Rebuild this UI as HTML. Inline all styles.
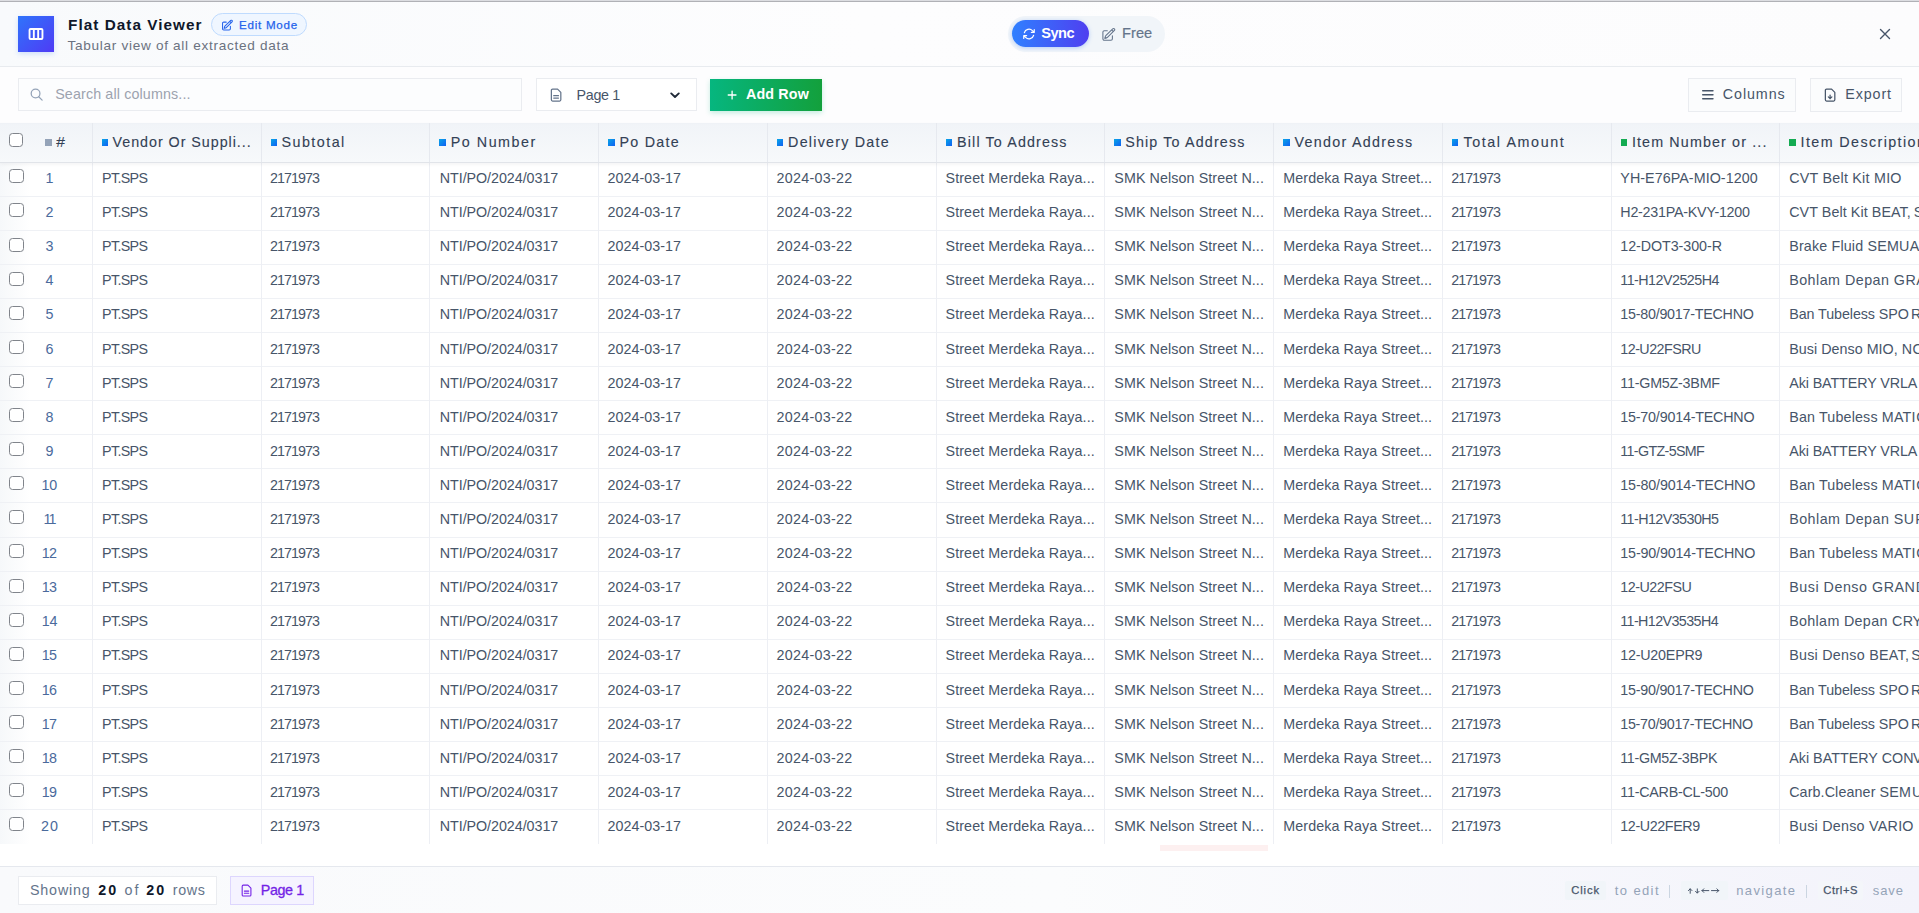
<!DOCTYPE html>
<html lang="en"><head><meta charset="utf-8"><title>Flat Data Viewer</title>
<style>
*{box-sizing:border-box;margin:0;padding:0}
html,body{width:1919px;height:913px;overflow:hidden;background:#fff}
body{font-family:"Liberation Sans",sans-serif;color:#475569;position:relative}
.abs,.t,.box,.cb,.sq,.vl,.row,.kbd,.sep{position:absolute}
.t{white-space:pre;display:block}
svg{display:block;overflow:visible}
.topline{position:absolute;left:0;top:0;width:1919px;height:2px;background:linear-gradient(#dcdde1 0,#dcdde1 50%,#b0b1b6 50%,#b0b1b6 100%)}
.hdr{position:absolute;left:0;top:2px;width:1919px;height:65px;background:linear-gradient(90deg,#f8fafc,#fdfdfe 45%,#fcfcfd);border-bottom:1px solid #e8ebef}
.hdr>*{margin-top:-2px}
.logo{position:absolute;left:18px;top:16px;width:36px;height:36px;background:linear-gradient(135deg,#2f74fb,#4f3bf5);box-shadow:0 2px 5px rgba(59,130,246,.22);display:flex;align-items:center;justify-content:center}
.pill-edit{position:absolute;left:211px;top:13px;width:96px;height:23px;border:1px solid #bfdbfe;background:#eff6ff;border-radius:12px}
.toggle{position:absolute;left:1008.300px;top:16.200px;width:156.400px;height:35.500px;border-radius:18px;background:#f1f5f9}
.sync{position:absolute;left:1012px;top:20px;width:76.700px;height:27px;border-radius:14px;background:linear-gradient(90deg,#2f80ff,#4f3ff0);box-shadow:0 1px 4px rgba(59,130,246,.35)}
.toolbar{position:absolute;left:0;top:67px;width:1919px;height:56px;background:#fdfdfe}
.toolbar>*{margin-top:-67px}
.box{border:1px solid #eaecf0;background:#fff}
.box.btn{background:#fbfcfd;border-color:#eaecf0}
.addrow{position:absolute;left:710px;top:79px;width:112px;height:32px;background:linear-gradient(90deg,#06b67f,#13a03c);box-shadow:0 2px 5px rgba(16,185,129,.24)}
.tbl{position:absolute;left:0;top:0;width:1919px;height:867px}
.tbody{position:absolute;left:0;top:0;width:1919px;height:867px}
.row{left:0;width:1919px;height:1px;background:#eff1f5}
.stick{position:absolute;left:0;top:162px;width:30px;height:682px;background:linear-gradient(90deg,#f6f8fa,#fff)}
.vl{top:162px;width:1px;height:682px;background:#edeff4}
.vl.h{top:0;height:39px;background:#e6e9ef}
.cb{left:9px;width:15px;height:14px;border:1.500px solid #80848b;border-radius:3.500px;background:#fff}
.cb.hc{width:14px;height:14px}
.thead{position:absolute;left:0;top:123px;width:1919px;height:39px;background:linear-gradient(#eef1f6 0,#f1f4f8 2px,#f7f9fb);box-shadow:0 1px 0 #e1e4e9,0 2px 4px rgba(15,23,42,.06)}
.sq{top:16px;width:6.500px;height:7px}
.sq.b{background:linear-gradient(135deg,#08a6e6,#1060f3)}
.sq.g{background:#14ab52}
.ftr{position:absolute;left:0;top:866px;width:1919px;height:47px;border-top:1px solid #e5e8ee;background:linear-gradient(90deg,#f9fafc,#fbfcfd 55%,#f3f3fb)}
.ftr>*{margin-top:-867px}
.chip{position:absolute;left:230px;top:876.250px;width:83.750px;height:28.250px;border:1px solid #ddd6fe;background:#f5f3ff}
.kbd{top:881.250px;height:18.750px;background:#f1f5f9;border-radius:2px}
.sep{top:884.500px;width:1px;height:13px;background:#cbd5e1}
.ghost{position:absolute;left:1160px;top:845px;width:108px;height:6px;background:#fdf0f0}
</style></head>
<body>
<div class="topline"></div>
<header class="hdr">
<div class="logo"><svg viewBox="0 0 24 24" width="18" height="18" fill="none" stroke="#fff" stroke-width="2.500" stroke-linecap="round" stroke-linejoin="round"><rect x="3.400" y="5.400" width="17.200" height="13.200" rx="1.400"/><path d="M9.100 5.400v13.200M14.900 5.400v13.200"/></svg></div>
<span class="t" style="left:68.00px;top:16.95px;font-size:15.3px;line-height:15.3px;font-weight:700;color:#0f172a;letter-spacing:1.040px;">Flat Data Viewer</span>
<span class="t" style="left:67.50px;top:38.89px;font-size:13.6px;line-height:13.6px;color:#6b7280;letter-spacing:0.697px;">Tabular view of all extracted data</span>
<div class="pill-edit"></div>
<svg class="abs" style="left:221px;top:18.5px" width="12.5" height="12.5" viewBox="0 0 24 24" fill="none" stroke="#2563eb" stroke-width="2" stroke-linecap="round" stroke-linejoin="round"><path d="m16.862 4.487 1.687-1.688a1.875 1.875 0 1 1 2.652 2.652L10.582 16.07a4.5 4.5 0 0 1-1.897 1.13L6 18l.8-2.685a4.5 4.5 0 0 1 1.13-1.897l8.932-8.931Zm0 0L19.5 7.125M18 14v4.75A2.25 2.25 0 0 1 15.750 21H5.250A2.250 2.250 0 0 1 3 18.750V8.250A2.250 2.250 0 0 1 5.250 6H10"/></svg>
<span class="t" style="left:239.00px;top:19.38px;font-size:11.6px;line-height:11.6px;color:#2563eb;letter-spacing:0.750px;-webkit-text-stroke:0.25px #2563eb;">Edit Mode</span>
<div class="toggle"></div><div class="sync"></div>
<svg class="abs" style="left:1021.5px;top:27.3px" width="14" height="14" viewBox="0 0 24 24" fill="none" stroke="#fff" stroke-width="2" stroke-linecap="round" stroke-linejoin="round"><path d="M16.023 9.348h4.992v-.001M2.985 19.644v-4.992m0 0h4.992m-4.993 0 3.181 3.183a8.250 8.250 0 0 0 13.803-3.700M4.031 9.865a8.250 8.250 0 0 1 13.803-3.700l3.181 3.182m0-4.991v4.990"/></svg>
<span class="t" style="left:1041.20px;top:26.04px;font-size:14.6px;line-height:14.6px;font-weight:700;color:#ffffff;letter-spacing:-0.464px;">Sync</span>
<svg class="abs" style="left:1101px;top:26.800px" width="15.200" height="15.200" viewBox="0 0 24 24" fill="none" stroke="#64748b" stroke-width="1.7" stroke-linecap="round" stroke-linejoin="round"><path d="m16.862 4.487 1.687-1.688a1.875 1.875 0 1 1 2.652 2.652L10.582 16.07a4.5 4.5 0 0 1-1.897 1.13L6 18l.8-2.685a4.5 4.5 0 0 1 1.13-1.897l8.932-8.931Zm0 0L19.5 7.125M18 14v4.75A2.25 2.25 0 0 1 15.750 21H5.250A2.250 2.250 0 0 1 3 18.750V8.250A2.250 2.250 0 0 1 5.250 6H10"/></svg>
<span class="t" style="left:1122.00px;top:25.84px;font-size:14.6px;line-height:14.6px;color:#64748b;letter-spacing:0.061px;-webkit-text-stroke:0.2px #64748b;">Free</span>
<svg class="abs" style="left:1876.750px;top:26.250px" width="16" height="16" viewBox="0 0 16 16" fill="none" stroke="#475569" stroke-width="1.400" stroke-linecap="round"><path d="M3.500 3.500l9 9M12.500 3.500l-9 9"/></svg>
</header>
<div class="toolbar">
<div class="box" style="left:18px;top:78px;width:504px;height:33px;background:#fcfdfe"></div>
<svg class="abs" style="left:29px;top:87px" width="15" height="15" viewBox="0 0 24 24" fill="none" stroke="#94a3b8" stroke-width="2" stroke-linecap="round"><circle cx="10.500" cy="10.500" r="7"/><path d="M21 21l-5.500-5.500"/></svg>
<span class="t" style="left:55.20px;top:87.20px;font-size:14.3px;line-height:14.3px;color:#9ca3af;letter-spacing:0.130px;">Search all columns...</span>
<div class="box" style="left:536px;top:78px;width:161px;height:33px"></div>
<svg class="abs" style="left:549.050px;top:87.500px" width="14.2" height="14.2" viewBox="0 0 24 24" fill="none" stroke="#64748b" stroke-width="2.1" stroke-linecap="round" stroke-linejoin="round"><path d="M14.500 2H6a2 2 0 0 0-2 2v16a2 2 0 0 0 2 2h12a2 2 0 0 0 2-2V7.500L14.500 2z"/><path d="M16 13H8M16 17H8"/></svg>
<span class="t" style="left:576.50px;top:87.70px;font-size:14.3px;line-height:14.3px;letter-spacing:-0.306px;">Page 1</span>
<svg class="abs" style="left:668.300px;top:89px" width="14" height="12" viewBox="0 0 14 12" fill="none" stroke="#1f2937" stroke-width="1.900" stroke-linecap="round" stroke-linejoin="round"><path d="M3.200 4.400l3.800 3.600 3.800-3.600"/></svg>
<div class="addrow"></div>
<svg class="abs" style="left:725.800px;top:88.700px" width="12" height="12" viewBox="0 0 12 12" fill="none" stroke="#fff" stroke-width="1.300" stroke-linecap="round"><path d="M6.100 2.100v7.800M2.200 6h7.800"/></svg>
<span class="t" style="left:746.00px;top:87.20px;font-size:14.3px;line-height:14.3px;font-weight:700;color:#ffffff;letter-spacing:0.141px;">Add Row</span>
<div class="box btn" style="left:1688px;top:78px;width:108px;height:34px"></div>
<svg class="abs" style="left:1701px;top:88px" width="14" height="14" viewBox="0 0 14 14" fill="none" stroke="#475569" stroke-width="1.400" stroke-linecap="round"><path d="M1.700 2.700h10.300M1.700 6.800h10.300M1.700 10.800h10.300"/></svg>
<span class="t" style="left:1722.80px;top:87.10px;font-size:14.3px;line-height:14.3px;letter-spacing:0.913px;">Columns</span>
<div class="box btn" style="left:1810px;top:78px;width:92px;height:34px"></div>
<svg class="abs" style="left:1822.750px;top:87.600px" width="14.200" height="14.200" viewBox="0 0 24 24" fill="none" stroke="#475569" stroke-width="2.100" stroke-linecap="round" stroke-linejoin="round"><path d="M14.500 2H6a2 2 0 0 0-2 2v16a2 2 0 0 0 2 2h12a2 2 0 0 0 2-2V7.500L14.500 2z"/><path d="M12 18v-6M9 15l3 3 3-3"/></svg>
<span class="t" style="left:1845.30px;top:87.10px;font-size:14.3px;line-height:14.3px;letter-spacing:0.874px;">Export</span>
</div>
<div class="tbl">
<div class="tbody">
<div class="stick"></div>
<div class="row" style="top:196px"></div>
<div class="row" style="top:230px"></div>
<div class="row" style="top:264px"></div>
<div class="row" style="top:298px"></div>
<div class="row" style="top:332px"></div>
<div class="row" style="top:366px"></div>
<div class="row" style="top:400px"></div>
<div class="row" style="top:434px"></div>
<div class="row" style="top:468px"></div>
<div class="row" style="top:502px"></div>
<div class="row" style="top:537px"></div>
<div class="row" style="top:571px"></div>
<div class="row" style="top:605px"></div>
<div class="row" style="top:639px"></div>
<div class="row" style="top:673px"></div>
<div class="row" style="top:707px"></div>
<div class="row" style="top:741px"></div>
<div class="row" style="top:775px"></div>
<div class="row" style="top:809px"></div>
<div class="ghost"></div>
<div class="vl" style="left:92px"></div>
<div class="vl" style="left:261px"></div>
<div class="vl" style="left:429px"></div>
<div class="vl" style="left:598px"></div>
<div class="vl" style="left:767px"></div>
<div class="vl" style="left:936px"></div>
<div class="vl" style="left:1104px"></div>
<div class="vl" style="left:1273px"></div>
<div class="vl" style="left:1442px"></div>
<div class="vl" style="left:1611px"></div>
<div class="vl" style="left:1779px"></div>
<div class="cb" style="top:169.30px"></div>
<span class="t" style="left:45.60px;top:171.00px;font-size:14.3px;line-height:14.3px;color:#4a6a9c;">1</span>
<span class="t" style="left:102.00px;top:171.00px;font-size:14.3px;line-height:14.3px;letter-spacing:-0.653px;">PT.SPS</span>
<span class="t" style="left:270.10px;top:171.00px;font-size:14.3px;line-height:14.3px;letter-spacing:-0.979px;">2171973</span>
<span class="t" style="left:439.75px;top:171.00px;font-size:14.3px;line-height:14.3px;letter-spacing:-0.048px;">NTI/PO/2024/0317</span>
<span class="t" style="left:607.60px;top:171.00px;font-size:14.3px;line-height:14.3px;letter-spacing:0.018px;">2024-03-17</span>
<span class="t" style="left:776.50px;top:171.00px;font-size:14.3px;line-height:14.3px;letter-spacing:0.284px;">2024-03-22</span>
<span class="t" style="left:945.50px;top:171.00px;font-size:14.3px;line-height:14.3px;letter-spacing:0.104px;">Street Merdeka Raya...</span>
<span class="t" style="left:1114.30px;top:171.00px;font-size:14.3px;line-height:14.3px;letter-spacing:0.086px;">SMK Nelson Street N...</span>
<span class="t" style="left:1283.30px;top:171.00px;font-size:14.3px;line-height:14.3px;letter-spacing:0.085px;">Merdeka Raya Street...</span>
<span class="t" style="left:1451.20px;top:171.00px;font-size:14.3px;line-height:14.3px;letter-spacing:-0.979px;">2171973</span>
<span class="t" style="left:1620.30px;top:171.00px;font-size:14.3px;line-height:14.3px;letter-spacing:0.062px;">YH-E76PA-MIO-1200</span>
<span class="t" style="left:1789.20px;top:171.00px;font-size:14.3px;line-height:14.3px;letter-spacing:0.248px;">CVT Belt Kit MIO</span>
<div class="cb" style="top:203.41px"></div>
<span class="t" style="left:45.60px;top:205.10px;font-size:14.3px;line-height:14.3px;color:#4a6a9c;">2</span>
<span class="t" style="left:102.00px;top:205.10px;font-size:14.3px;line-height:14.3px;letter-spacing:-0.653px;">PT.SPS</span>
<span class="t" style="left:270.10px;top:205.10px;font-size:14.3px;line-height:14.3px;letter-spacing:-0.979px;">2171973</span>
<span class="t" style="left:439.75px;top:205.10px;font-size:14.3px;line-height:14.3px;letter-spacing:-0.048px;">NTI/PO/2024/0317</span>
<span class="t" style="left:607.60px;top:205.10px;font-size:14.3px;line-height:14.3px;letter-spacing:0.018px;">2024-03-17</span>
<span class="t" style="left:776.50px;top:205.10px;font-size:14.3px;line-height:14.3px;letter-spacing:0.284px;">2024-03-22</span>
<span class="t" style="left:945.50px;top:205.10px;font-size:14.3px;line-height:14.3px;letter-spacing:0.104px;">Street Merdeka Raya...</span>
<span class="t" style="left:1114.30px;top:205.10px;font-size:14.3px;line-height:14.3px;letter-spacing:0.086px;">SMK Nelson Street N...</span>
<span class="t" style="left:1283.30px;top:205.10px;font-size:14.3px;line-height:14.3px;letter-spacing:0.085px;">Merdeka Raya Street...</span>
<span class="t" style="left:1451.20px;top:205.10px;font-size:14.3px;line-height:14.3px;letter-spacing:-0.979px;">2171973</span>
<span class="t" style="left:1620.30px;top:205.10px;font-size:14.3px;line-height:14.3px;letter-spacing:-0.239px;">H2-231PA-KVY-1200</span>
<span class="t" style="left:1789.20px;top:205.10px;font-size:14.3px;line-height:14.3px;letter-spacing:0.079px;">CVT Belt Kit BEAT,</span>
<span class="t" style="left:1913.80px;top:205.10px;font-size:14.3px;line-height:14.3px;">S</span>
<div class="cb" style="top:237.51px"></div>
<span class="t" style="left:45.60px;top:239.21px;font-size:14.3px;line-height:14.3px;color:#4a6a9c;">3</span>
<span class="t" style="left:102.00px;top:239.21px;font-size:14.3px;line-height:14.3px;letter-spacing:-0.653px;">PT.SPS</span>
<span class="t" style="left:270.10px;top:239.21px;font-size:14.3px;line-height:14.3px;letter-spacing:-0.979px;">2171973</span>
<span class="t" style="left:439.75px;top:239.21px;font-size:14.3px;line-height:14.3px;letter-spacing:-0.048px;">NTI/PO/2024/0317</span>
<span class="t" style="left:607.60px;top:239.21px;font-size:14.3px;line-height:14.3px;letter-spacing:0.018px;">2024-03-17</span>
<span class="t" style="left:776.50px;top:239.21px;font-size:14.3px;line-height:14.3px;letter-spacing:0.284px;">2024-03-22</span>
<span class="t" style="left:945.50px;top:239.21px;font-size:14.3px;line-height:14.3px;letter-spacing:0.104px;">Street Merdeka Raya...</span>
<span class="t" style="left:1114.30px;top:239.21px;font-size:14.3px;line-height:14.3px;letter-spacing:0.086px;">SMK Nelson Street N...</span>
<span class="t" style="left:1283.30px;top:239.21px;font-size:14.3px;line-height:14.3px;letter-spacing:0.085px;">Merdeka Raya Street...</span>
<span class="t" style="left:1451.20px;top:239.21px;font-size:14.3px;line-height:14.3px;letter-spacing:-0.979px;">2171973</span>
<span class="t" style="left:1620.30px;top:239.21px;font-size:14.3px;line-height:14.3px;letter-spacing:-0.067px;">12-DOT3-300-R</span>
<span class="t" style="left:1789.20px;top:239.21px;font-size:14.3px;line-height:14.3px;letter-spacing:0.167px;">Brake Fluid SEMU</span>
<span class="t" style="left:1909.80px;top:239.21px;font-size:14.3px;line-height:14.3px;">A</span>
<div class="cb" style="top:271.62px"></div>
<span class="t" style="left:45.60px;top:273.31px;font-size:14.3px;line-height:14.3px;color:#4a6a9c;">4</span>
<span class="t" style="left:102.00px;top:273.31px;font-size:14.3px;line-height:14.3px;letter-spacing:-0.653px;">PT.SPS</span>
<span class="t" style="left:270.10px;top:273.31px;font-size:14.3px;line-height:14.3px;letter-spacing:-0.979px;">2171973</span>
<span class="t" style="left:439.75px;top:273.31px;font-size:14.3px;line-height:14.3px;letter-spacing:-0.048px;">NTI/PO/2024/0317</span>
<span class="t" style="left:607.60px;top:273.31px;font-size:14.3px;line-height:14.3px;letter-spacing:0.018px;">2024-03-17</span>
<span class="t" style="left:776.50px;top:273.31px;font-size:14.3px;line-height:14.3px;letter-spacing:0.284px;">2024-03-22</span>
<span class="t" style="left:945.50px;top:273.31px;font-size:14.3px;line-height:14.3px;letter-spacing:0.104px;">Street Merdeka Raya...</span>
<span class="t" style="left:1114.30px;top:273.31px;font-size:14.3px;line-height:14.3px;letter-spacing:0.086px;">SMK Nelson Street N...</span>
<span class="t" style="left:1283.30px;top:273.31px;font-size:14.3px;line-height:14.3px;letter-spacing:0.085px;">Merdeka Raya Street...</span>
<span class="t" style="left:1451.20px;top:273.31px;font-size:14.3px;line-height:14.3px;letter-spacing:-0.979px;">2171973</span>
<span class="t" style="left:1620.30px;top:273.31px;font-size:14.3px;line-height:14.3px;letter-spacing:-0.529px;">11-H12V2525H4</span>
<span class="t" style="left:1789.20px;top:273.31px;font-size:14.3px;line-height:14.3px;letter-spacing:0.471px;">Bohlam Depan GR</span>
<span class="t" style="left:1916.30px;top:273.31px;font-size:14.3px;line-height:14.3px;">A</span>
<div class="cb" style="top:305.72px"></div>
<span class="t" style="left:45.60px;top:307.42px;font-size:14.3px;line-height:14.3px;color:#4a6a9c;">5</span>
<span class="t" style="left:102.00px;top:307.42px;font-size:14.3px;line-height:14.3px;letter-spacing:-0.653px;">PT.SPS</span>
<span class="t" style="left:270.10px;top:307.42px;font-size:14.3px;line-height:14.3px;letter-spacing:-0.979px;">2171973</span>
<span class="t" style="left:439.75px;top:307.42px;font-size:14.3px;line-height:14.3px;letter-spacing:-0.048px;">NTI/PO/2024/0317</span>
<span class="t" style="left:607.60px;top:307.42px;font-size:14.3px;line-height:14.3px;letter-spacing:0.018px;">2024-03-17</span>
<span class="t" style="left:776.50px;top:307.42px;font-size:14.3px;line-height:14.3px;letter-spacing:0.284px;">2024-03-22</span>
<span class="t" style="left:945.50px;top:307.42px;font-size:14.3px;line-height:14.3px;letter-spacing:0.104px;">Street Merdeka Raya...</span>
<span class="t" style="left:1114.30px;top:307.42px;font-size:14.3px;line-height:14.3px;letter-spacing:0.086px;">SMK Nelson Street N...</span>
<span class="t" style="left:1283.30px;top:307.42px;font-size:14.3px;line-height:14.3px;letter-spacing:0.085px;">Merdeka Raya Street...</span>
<span class="t" style="left:1451.20px;top:307.42px;font-size:14.3px;line-height:14.3px;letter-spacing:-0.979px;">2171973</span>
<span class="t" style="left:1620.30px;top:307.42px;font-size:14.3px;line-height:14.3px;letter-spacing:-0.242px;">15-80/9017-TECHNO</span>
<span class="t" style="left:1789.20px;top:307.42px;font-size:14.3px;line-height:14.3px;letter-spacing:-0.074px;">Ban Tubeless SPO</span>
<span class="t" style="left:1911.10px;top:307.42px;font-size:14.3px;line-height:14.3px;">R</span>
<div class="cb" style="top:339.82px"></div>
<span class="t" style="left:45.60px;top:341.52px;font-size:14.3px;line-height:14.3px;color:#4a6a9c;">6</span>
<span class="t" style="left:102.00px;top:341.52px;font-size:14.3px;line-height:14.3px;letter-spacing:-0.653px;">PT.SPS</span>
<span class="t" style="left:270.10px;top:341.52px;font-size:14.3px;line-height:14.3px;letter-spacing:-0.979px;">2171973</span>
<span class="t" style="left:439.75px;top:341.52px;font-size:14.3px;line-height:14.3px;letter-spacing:-0.048px;">NTI/PO/2024/0317</span>
<span class="t" style="left:607.60px;top:341.52px;font-size:14.3px;line-height:14.3px;letter-spacing:0.018px;">2024-03-17</span>
<span class="t" style="left:776.50px;top:341.52px;font-size:14.3px;line-height:14.3px;letter-spacing:0.284px;">2024-03-22</span>
<span class="t" style="left:945.50px;top:341.52px;font-size:14.3px;line-height:14.3px;letter-spacing:0.104px;">Street Merdeka Raya...</span>
<span class="t" style="left:1114.30px;top:341.52px;font-size:14.3px;line-height:14.3px;letter-spacing:0.086px;">SMK Nelson Street N...</span>
<span class="t" style="left:1283.30px;top:341.52px;font-size:14.3px;line-height:14.3px;letter-spacing:0.085px;">Merdeka Raya Street...</span>
<span class="t" style="left:1451.20px;top:341.52px;font-size:14.3px;line-height:14.3px;letter-spacing:-0.979px;">2171973</span>
<span class="t" style="left:1620.30px;top:341.52px;font-size:14.3px;line-height:14.3px;letter-spacing:-0.535px;">12-U22FSRU</span>
<span class="t" style="left:1789.20px;top:341.52px;font-size:14.3px;line-height:14.3px;letter-spacing:0.034px;">Busi Denso MIO, N</span>
<span class="t" style="left:1912.50px;top:341.52px;font-size:14.3px;line-height:14.3px;">O</span>
<div class="cb" style="top:373.93px"></div>
<span class="t" style="left:45.60px;top:375.63px;font-size:14.3px;line-height:14.3px;color:#4a6a9c;">7</span>
<span class="t" style="left:102.00px;top:375.63px;font-size:14.3px;line-height:14.3px;letter-spacing:-0.653px;">PT.SPS</span>
<span class="t" style="left:270.10px;top:375.63px;font-size:14.3px;line-height:14.3px;letter-spacing:-0.979px;">2171973</span>
<span class="t" style="left:439.75px;top:375.63px;font-size:14.3px;line-height:14.3px;letter-spacing:-0.048px;">NTI/PO/2024/0317</span>
<span class="t" style="left:607.60px;top:375.63px;font-size:14.3px;line-height:14.3px;letter-spacing:0.018px;">2024-03-17</span>
<span class="t" style="left:776.50px;top:375.63px;font-size:14.3px;line-height:14.3px;letter-spacing:0.284px;">2024-03-22</span>
<span class="t" style="left:945.50px;top:375.63px;font-size:14.3px;line-height:14.3px;letter-spacing:0.104px;">Street Merdeka Raya...</span>
<span class="t" style="left:1114.30px;top:375.63px;font-size:14.3px;line-height:14.3px;letter-spacing:0.086px;">SMK Nelson Street N...</span>
<span class="t" style="left:1283.30px;top:375.63px;font-size:14.3px;line-height:14.3px;letter-spacing:0.085px;">Merdeka Raya Street...</span>
<span class="t" style="left:1451.20px;top:375.63px;font-size:14.3px;line-height:14.3px;letter-spacing:-0.979px;">2171973</span>
<span class="t" style="left:1620.30px;top:375.63px;font-size:14.3px;line-height:14.3px;letter-spacing:-0.220px;">11-GM5Z-3BMF</span>
<span class="t" style="left:1789.20px;top:375.63px;font-size:14.3px;line-height:14.3px;letter-spacing:-0.094px;">Aki BATTERY VRLA</span>
<div class="cb" style="top:408.04px"></div>
<span class="t" style="left:45.60px;top:409.73px;font-size:14.3px;line-height:14.3px;color:#4a6a9c;">8</span>
<span class="t" style="left:102.00px;top:409.73px;font-size:14.3px;line-height:14.3px;letter-spacing:-0.653px;">PT.SPS</span>
<span class="t" style="left:270.10px;top:409.73px;font-size:14.3px;line-height:14.3px;letter-spacing:-0.979px;">2171973</span>
<span class="t" style="left:439.75px;top:409.73px;font-size:14.3px;line-height:14.3px;letter-spacing:-0.048px;">NTI/PO/2024/0317</span>
<span class="t" style="left:607.60px;top:409.73px;font-size:14.3px;line-height:14.3px;letter-spacing:0.018px;">2024-03-17</span>
<span class="t" style="left:776.50px;top:409.73px;font-size:14.3px;line-height:14.3px;letter-spacing:0.284px;">2024-03-22</span>
<span class="t" style="left:945.50px;top:409.73px;font-size:14.3px;line-height:14.3px;letter-spacing:0.104px;">Street Merdeka Raya...</span>
<span class="t" style="left:1114.30px;top:409.73px;font-size:14.3px;line-height:14.3px;letter-spacing:0.086px;">SMK Nelson Street N...</span>
<span class="t" style="left:1283.30px;top:409.73px;font-size:14.3px;line-height:14.3px;letter-spacing:0.085px;">Merdeka Raya Street...</span>
<span class="t" style="left:1451.20px;top:409.73px;font-size:14.3px;line-height:14.3px;letter-spacing:-0.979px;">2171973</span>
<span class="t" style="left:1620.30px;top:409.73px;font-size:14.3px;line-height:14.3px;letter-spacing:-0.198px;">15-70/9014-TECHNO</span>
<span class="t" style="left:1789.20px;top:409.73px;font-size:14.3px;line-height:14.3px;letter-spacing:0.156px;">Ban Tubeless MATI</span>
<span class="t" style="left:1916.30px;top:409.73px;font-size:14.3px;line-height:14.3px;">C</span>
<div class="cb" style="top:442.14px"></div>
<span class="t" style="left:45.60px;top:443.84px;font-size:14.3px;line-height:14.3px;color:#4a6a9c;">9</span>
<span class="t" style="left:102.00px;top:443.84px;font-size:14.3px;line-height:14.3px;letter-spacing:-0.653px;">PT.SPS</span>
<span class="t" style="left:270.10px;top:443.84px;font-size:14.3px;line-height:14.3px;letter-spacing:-0.979px;">2171973</span>
<span class="t" style="left:439.75px;top:443.84px;font-size:14.3px;line-height:14.3px;letter-spacing:-0.048px;">NTI/PO/2024/0317</span>
<span class="t" style="left:607.60px;top:443.84px;font-size:14.3px;line-height:14.3px;letter-spacing:0.018px;">2024-03-17</span>
<span class="t" style="left:776.50px;top:443.84px;font-size:14.3px;line-height:14.3px;letter-spacing:0.284px;">2024-03-22</span>
<span class="t" style="left:945.50px;top:443.84px;font-size:14.3px;line-height:14.3px;letter-spacing:0.104px;">Street Merdeka Raya...</span>
<span class="t" style="left:1114.30px;top:443.84px;font-size:14.3px;line-height:14.3px;letter-spacing:0.086px;">SMK Nelson Street N...</span>
<span class="t" style="left:1283.30px;top:443.84px;font-size:14.3px;line-height:14.3px;letter-spacing:0.085px;">Merdeka Raya Street...</span>
<span class="t" style="left:1451.20px;top:443.84px;font-size:14.3px;line-height:14.3px;letter-spacing:-0.979px;">2171973</span>
<span class="t" style="left:1620.30px;top:443.84px;font-size:14.3px;line-height:14.3px;letter-spacing:-0.659px;">11-GTZ-5SMF</span>
<span class="t" style="left:1789.20px;top:443.84px;font-size:14.3px;line-height:14.3px;letter-spacing:-0.094px;">Aki BATTERY VRLA</span>
<div class="cb" style="top:476.25px"></div>
<span class="t" style="left:41.40px;top:477.94px;font-size:14.3px;line-height:14.3px;color:#4a6a9c;">10</span>
<span class="t" style="left:102.00px;top:477.94px;font-size:14.3px;line-height:14.3px;letter-spacing:-0.653px;">PT.SPS</span>
<span class="t" style="left:270.10px;top:477.94px;font-size:14.3px;line-height:14.3px;letter-spacing:-0.979px;">2171973</span>
<span class="t" style="left:439.75px;top:477.94px;font-size:14.3px;line-height:14.3px;letter-spacing:-0.048px;">NTI/PO/2024/0317</span>
<span class="t" style="left:607.60px;top:477.94px;font-size:14.3px;line-height:14.3px;letter-spacing:0.018px;">2024-03-17</span>
<span class="t" style="left:776.50px;top:477.94px;font-size:14.3px;line-height:14.3px;letter-spacing:0.284px;">2024-03-22</span>
<span class="t" style="left:945.50px;top:477.94px;font-size:14.3px;line-height:14.3px;letter-spacing:0.104px;">Street Merdeka Raya...</span>
<span class="t" style="left:1114.30px;top:477.94px;font-size:14.3px;line-height:14.3px;letter-spacing:0.086px;">SMK Nelson Street N...</span>
<span class="t" style="left:1283.30px;top:477.94px;font-size:14.3px;line-height:14.3px;letter-spacing:0.085px;">Merdeka Raya Street...</span>
<span class="t" style="left:1451.20px;top:477.94px;font-size:14.3px;line-height:14.3px;letter-spacing:-0.979px;">2171973</span>
<span class="t" style="left:1620.30px;top:477.94px;font-size:14.3px;line-height:14.3px;letter-spacing:-0.148px;">15-80/9014-TECHNO</span>
<span class="t" style="left:1789.20px;top:477.94px;font-size:14.3px;line-height:14.3px;letter-spacing:0.156px;">Ban Tubeless MATI</span>
<span class="t" style="left:1916.30px;top:477.94px;font-size:14.3px;line-height:14.3px;">C</span>
<div class="cb" style="top:510.35px"></div>
<span class="t" style="left:43.60px;top:512.05px;font-size:14.3px;line-height:14.3px;color:#4a6a9c;letter-spacing:-2.100px;">11</span>
<span class="t" style="left:102.00px;top:512.05px;font-size:14.3px;line-height:14.3px;letter-spacing:-0.653px;">PT.SPS</span>
<span class="t" style="left:270.10px;top:512.05px;font-size:14.3px;line-height:14.3px;letter-spacing:-0.979px;">2171973</span>
<span class="t" style="left:439.75px;top:512.05px;font-size:14.3px;line-height:14.3px;letter-spacing:-0.048px;">NTI/PO/2024/0317</span>
<span class="t" style="left:607.60px;top:512.05px;font-size:14.3px;line-height:14.3px;letter-spacing:0.018px;">2024-03-17</span>
<span class="t" style="left:776.50px;top:512.05px;font-size:14.3px;line-height:14.3px;letter-spacing:0.284px;">2024-03-22</span>
<span class="t" style="left:945.50px;top:512.05px;font-size:14.3px;line-height:14.3px;letter-spacing:0.104px;">Street Merdeka Raya...</span>
<span class="t" style="left:1114.30px;top:512.05px;font-size:14.3px;line-height:14.3px;letter-spacing:0.086px;">SMK Nelson Street N...</span>
<span class="t" style="left:1283.30px;top:512.05px;font-size:14.3px;line-height:14.3px;letter-spacing:0.085px;">Merdeka Raya Street...</span>
<span class="t" style="left:1451.20px;top:512.05px;font-size:14.3px;line-height:14.3px;letter-spacing:-0.979px;">2171973</span>
<span class="t" style="left:1620.30px;top:512.05px;font-size:14.3px;line-height:14.3px;letter-spacing:-0.563px;">11-H12V3530H5</span>
<span class="t" style="left:1789.20px;top:512.05px;font-size:14.3px;line-height:14.3px;letter-spacing:0.463px;">Bohlam Depan SU</span>
<span class="t" style="left:1915.30px;top:512.05px;font-size:14.3px;line-height:14.3px;">P</span>
<div class="cb" style="top:544.45px"></div>
<span class="t" style="left:41.80px;top:546.15px;font-size:14.3px;line-height:14.3px;color:#4a6a9c;letter-spacing:-0.800px;">12</span>
<span class="t" style="left:102.00px;top:546.15px;font-size:14.3px;line-height:14.3px;letter-spacing:-0.653px;">PT.SPS</span>
<span class="t" style="left:270.10px;top:546.15px;font-size:14.3px;line-height:14.3px;letter-spacing:-0.979px;">2171973</span>
<span class="t" style="left:439.75px;top:546.15px;font-size:14.3px;line-height:14.3px;letter-spacing:-0.048px;">NTI/PO/2024/0317</span>
<span class="t" style="left:607.60px;top:546.15px;font-size:14.3px;line-height:14.3px;letter-spacing:0.018px;">2024-03-17</span>
<span class="t" style="left:776.50px;top:546.15px;font-size:14.3px;line-height:14.3px;letter-spacing:0.284px;">2024-03-22</span>
<span class="t" style="left:945.50px;top:546.15px;font-size:14.3px;line-height:14.3px;letter-spacing:0.104px;">Street Merdeka Raya...</span>
<span class="t" style="left:1114.30px;top:546.15px;font-size:14.3px;line-height:14.3px;letter-spacing:0.086px;">SMK Nelson Street N...</span>
<span class="t" style="left:1283.30px;top:546.15px;font-size:14.3px;line-height:14.3px;letter-spacing:0.085px;">Merdeka Raya Street...</span>
<span class="t" style="left:1451.20px;top:546.15px;font-size:14.3px;line-height:14.3px;letter-spacing:-0.979px;">2171973</span>
<span class="t" style="left:1620.30px;top:546.15px;font-size:14.3px;line-height:14.3px;letter-spacing:-0.148px;">15-90/9014-TECHNO</span>
<span class="t" style="left:1789.20px;top:546.15px;font-size:14.3px;line-height:14.3px;letter-spacing:0.156px;">Ban Tubeless MATI</span>
<span class="t" style="left:1916.30px;top:546.15px;font-size:14.3px;line-height:14.3px;">C</span>
<div class="cb" style="top:578.56px"></div>
<span class="t" style="left:41.80px;top:580.26px;font-size:14.3px;line-height:14.3px;color:#4a6a9c;letter-spacing:-0.800px;">13</span>
<span class="t" style="left:102.00px;top:580.26px;font-size:14.3px;line-height:14.3px;letter-spacing:-0.653px;">PT.SPS</span>
<span class="t" style="left:270.10px;top:580.26px;font-size:14.3px;line-height:14.3px;letter-spacing:-0.979px;">2171973</span>
<span class="t" style="left:439.75px;top:580.26px;font-size:14.3px;line-height:14.3px;letter-spacing:-0.048px;">NTI/PO/2024/0317</span>
<span class="t" style="left:607.60px;top:580.26px;font-size:14.3px;line-height:14.3px;letter-spacing:0.018px;">2024-03-17</span>
<span class="t" style="left:776.50px;top:580.26px;font-size:14.3px;line-height:14.3px;letter-spacing:0.284px;">2024-03-22</span>
<span class="t" style="left:945.50px;top:580.26px;font-size:14.3px;line-height:14.3px;letter-spacing:0.104px;">Street Merdeka Raya...</span>
<span class="t" style="left:1114.30px;top:580.26px;font-size:14.3px;line-height:14.3px;letter-spacing:0.086px;">SMK Nelson Street N...</span>
<span class="t" style="left:1283.30px;top:580.26px;font-size:14.3px;line-height:14.3px;letter-spacing:0.085px;">Merdeka Raya Street...</span>
<span class="t" style="left:1451.20px;top:580.26px;font-size:14.3px;line-height:14.3px;letter-spacing:-0.979px;">2171973</span>
<span class="t" style="left:1620.30px;top:580.26px;font-size:14.3px;line-height:14.3px;letter-spacing:-0.500px;">12-U22FSU</span>
<span class="t" style="left:1789.20px;top:580.26px;font-size:14.3px;line-height:14.3px;letter-spacing:0.522px;">Busi Denso GRAN</span>
<span class="t" style="left:1915.70px;top:580.26px;font-size:14.3px;line-height:14.3px;">D</span>
<div class="cb" style="top:612.66px"></div>
<span class="t" style="left:41.80px;top:614.36px;font-size:14.3px;line-height:14.3px;color:#4a6a9c;letter-spacing:-0.200px;">14</span>
<span class="t" style="left:102.00px;top:614.36px;font-size:14.3px;line-height:14.3px;letter-spacing:-0.653px;">PT.SPS</span>
<span class="t" style="left:270.10px;top:614.36px;font-size:14.3px;line-height:14.3px;letter-spacing:-0.979px;">2171973</span>
<span class="t" style="left:439.75px;top:614.36px;font-size:14.3px;line-height:14.3px;letter-spacing:-0.048px;">NTI/PO/2024/0317</span>
<span class="t" style="left:607.60px;top:614.36px;font-size:14.3px;line-height:14.3px;letter-spacing:0.018px;">2024-03-17</span>
<span class="t" style="left:776.50px;top:614.36px;font-size:14.3px;line-height:14.3px;letter-spacing:0.284px;">2024-03-22</span>
<span class="t" style="left:945.50px;top:614.36px;font-size:14.3px;line-height:14.3px;letter-spacing:0.104px;">Street Merdeka Raya...</span>
<span class="t" style="left:1114.30px;top:614.36px;font-size:14.3px;line-height:14.3px;letter-spacing:0.086px;">SMK Nelson Street N...</span>
<span class="t" style="left:1283.30px;top:614.36px;font-size:14.3px;line-height:14.3px;letter-spacing:0.085px;">Merdeka Raya Street...</span>
<span class="t" style="left:1451.20px;top:614.36px;font-size:14.3px;line-height:14.3px;letter-spacing:-0.979px;">2171973</span>
<span class="t" style="left:1620.30px;top:614.36px;font-size:14.3px;line-height:14.3px;letter-spacing:-0.596px;">11-H12V3535H4</span>
<span class="t" style="left:1789.20px;top:614.36px;font-size:14.3px;line-height:14.3px;letter-spacing:0.328px;">Bohlam Depan CR</span>
<span class="t" style="left:1912.50px;top:614.36px;font-size:14.3px;line-height:14.3px;">Y</span>
<div class="cb" style="top:646.77px"></div>
<span class="t" style="left:41.80px;top:648.47px;font-size:14.3px;line-height:14.3px;color:#4a6a9c;letter-spacing:-0.800px;">15</span>
<span class="t" style="left:102.00px;top:648.47px;font-size:14.3px;line-height:14.3px;letter-spacing:-0.653px;">PT.SPS</span>
<span class="t" style="left:270.10px;top:648.47px;font-size:14.3px;line-height:14.3px;letter-spacing:-0.979px;">2171973</span>
<span class="t" style="left:439.75px;top:648.47px;font-size:14.3px;line-height:14.3px;letter-spacing:-0.048px;">NTI/PO/2024/0317</span>
<span class="t" style="left:607.60px;top:648.47px;font-size:14.3px;line-height:14.3px;letter-spacing:0.018px;">2024-03-17</span>
<span class="t" style="left:776.50px;top:648.47px;font-size:14.3px;line-height:14.3px;letter-spacing:0.284px;">2024-03-22</span>
<span class="t" style="left:945.50px;top:648.47px;font-size:14.3px;line-height:14.3px;letter-spacing:0.104px;">Street Merdeka Raya...</span>
<span class="t" style="left:1114.30px;top:648.47px;font-size:14.3px;line-height:14.3px;letter-spacing:0.086px;">SMK Nelson Street N...</span>
<span class="t" style="left:1283.30px;top:648.47px;font-size:14.3px;line-height:14.3px;letter-spacing:0.085px;">Merdeka Raya Street...</span>
<span class="t" style="left:1451.20px;top:648.47px;font-size:14.3px;line-height:14.3px;letter-spacing:-0.979px;">2171973</span>
<span class="t" style="left:1620.30px;top:648.47px;font-size:14.3px;line-height:14.3px;letter-spacing:-0.228px;">12-U20EPR9</span>
<span class="t" style="left:1789.20px;top:648.47px;font-size:14.3px;line-height:14.3px;letter-spacing:0.263px;">Busi Denso BEAT,</span>
<span class="t" style="left:1911.20px;top:648.47px;font-size:14.3px;line-height:14.3px;">S</span>
<div class="cb" style="top:680.87px"></div>
<span class="t" style="left:41.80px;top:682.57px;font-size:14.3px;line-height:14.3px;color:#4a6a9c;letter-spacing:-0.800px;">16</span>
<span class="t" style="left:102.00px;top:682.57px;font-size:14.3px;line-height:14.3px;letter-spacing:-0.653px;">PT.SPS</span>
<span class="t" style="left:270.10px;top:682.57px;font-size:14.3px;line-height:14.3px;letter-spacing:-0.979px;">2171973</span>
<span class="t" style="left:439.75px;top:682.57px;font-size:14.3px;line-height:14.3px;letter-spacing:-0.048px;">NTI/PO/2024/0317</span>
<span class="t" style="left:607.60px;top:682.57px;font-size:14.3px;line-height:14.3px;letter-spacing:0.018px;">2024-03-17</span>
<span class="t" style="left:776.50px;top:682.57px;font-size:14.3px;line-height:14.3px;letter-spacing:0.284px;">2024-03-22</span>
<span class="t" style="left:945.50px;top:682.57px;font-size:14.3px;line-height:14.3px;letter-spacing:0.104px;">Street Merdeka Raya...</span>
<span class="t" style="left:1114.30px;top:682.57px;font-size:14.3px;line-height:14.3px;letter-spacing:0.086px;">SMK Nelson Street N...</span>
<span class="t" style="left:1283.30px;top:682.57px;font-size:14.3px;line-height:14.3px;letter-spacing:0.085px;">Merdeka Raya Street...</span>
<span class="t" style="left:1451.20px;top:682.57px;font-size:14.3px;line-height:14.3px;letter-spacing:-0.979px;">2171973</span>
<span class="t" style="left:1620.30px;top:682.57px;font-size:14.3px;line-height:14.3px;letter-spacing:-0.242px;">15-90/9017-TECHNO</span>
<span class="t" style="left:1789.20px;top:682.57px;font-size:14.3px;line-height:14.3px;letter-spacing:-0.074px;">Ban Tubeless SPO</span>
<span class="t" style="left:1911.10px;top:682.57px;font-size:14.3px;line-height:14.3px;">R</span>
<div class="cb" style="top:714.98px"></div>
<span class="t" style="left:41.80px;top:716.68px;font-size:14.3px;line-height:14.3px;color:#4a6a9c;letter-spacing:-0.800px;">17</span>
<span class="t" style="left:102.00px;top:716.68px;font-size:14.3px;line-height:14.3px;letter-spacing:-0.653px;">PT.SPS</span>
<span class="t" style="left:270.10px;top:716.68px;font-size:14.3px;line-height:14.3px;letter-spacing:-0.979px;">2171973</span>
<span class="t" style="left:439.75px;top:716.68px;font-size:14.3px;line-height:14.3px;letter-spacing:-0.048px;">NTI/PO/2024/0317</span>
<span class="t" style="left:607.60px;top:716.68px;font-size:14.3px;line-height:14.3px;letter-spacing:0.018px;">2024-03-17</span>
<span class="t" style="left:776.50px;top:716.68px;font-size:14.3px;line-height:14.3px;letter-spacing:0.284px;">2024-03-22</span>
<span class="t" style="left:945.50px;top:716.68px;font-size:14.3px;line-height:14.3px;letter-spacing:0.104px;">Street Merdeka Raya...</span>
<span class="t" style="left:1114.30px;top:716.68px;font-size:14.3px;line-height:14.3px;letter-spacing:0.086px;">SMK Nelson Street N...</span>
<span class="t" style="left:1283.30px;top:716.68px;font-size:14.3px;line-height:14.3px;letter-spacing:0.085px;">Merdeka Raya Street...</span>
<span class="t" style="left:1451.20px;top:716.68px;font-size:14.3px;line-height:14.3px;letter-spacing:-0.979px;">2171973</span>
<span class="t" style="left:1620.30px;top:716.68px;font-size:14.3px;line-height:14.3px;letter-spacing:-0.292px;">15-70/9017-TECHNO</span>
<span class="t" style="left:1789.20px;top:716.68px;font-size:14.3px;line-height:14.3px;letter-spacing:-0.074px;">Ban Tubeless SPO</span>
<span class="t" style="left:1911.10px;top:716.68px;font-size:14.3px;line-height:14.3px;">R</span>
<div class="cb" style="top:749.08px"></div>
<span class="t" style="left:41.80px;top:750.78px;font-size:14.3px;line-height:14.3px;color:#4a6a9c;letter-spacing:-0.800px;">18</span>
<span class="t" style="left:102.00px;top:750.78px;font-size:14.3px;line-height:14.3px;letter-spacing:-0.653px;">PT.SPS</span>
<span class="t" style="left:270.10px;top:750.78px;font-size:14.3px;line-height:14.3px;letter-spacing:-0.979px;">2171973</span>
<span class="t" style="left:439.75px;top:750.78px;font-size:14.3px;line-height:14.3px;letter-spacing:-0.048px;">NTI/PO/2024/0317</span>
<span class="t" style="left:607.60px;top:750.78px;font-size:14.3px;line-height:14.3px;letter-spacing:0.018px;">2024-03-17</span>
<span class="t" style="left:776.50px;top:750.78px;font-size:14.3px;line-height:14.3px;letter-spacing:0.284px;">2024-03-22</span>
<span class="t" style="left:945.50px;top:750.78px;font-size:14.3px;line-height:14.3px;letter-spacing:0.104px;">Street Merdeka Raya...</span>
<span class="t" style="left:1114.30px;top:750.78px;font-size:14.3px;line-height:14.3px;letter-spacing:0.086px;">SMK Nelson Street N...</span>
<span class="t" style="left:1283.30px;top:750.78px;font-size:14.3px;line-height:14.3px;letter-spacing:0.085px;">Merdeka Raya Street...</span>
<span class="t" style="left:1451.20px;top:750.78px;font-size:14.3px;line-height:14.3px;letter-spacing:-0.979px;">2171973</span>
<span class="t" style="left:1620.30px;top:750.78px;font-size:14.3px;line-height:14.3px;letter-spacing:-0.313px;">11-GM5Z-3BPK</span>
<span class="t" style="left:1789.20px;top:750.78px;font-size:14.3px;line-height:14.3px;letter-spacing:0.026px;">Aki BATTERY CON</span>
<span class="t" style="left:1913.10px;top:750.78px;font-size:14.3px;line-height:14.3px;">V</span>
<div class="cb" style="top:783.19px"></div>
<span class="t" style="left:41.80px;top:784.89px;font-size:14.3px;line-height:14.3px;color:#4a6a9c;letter-spacing:-0.800px;">19</span>
<span class="t" style="left:102.00px;top:784.89px;font-size:14.3px;line-height:14.3px;letter-spacing:-0.653px;">PT.SPS</span>
<span class="t" style="left:270.10px;top:784.89px;font-size:14.3px;line-height:14.3px;letter-spacing:-0.979px;">2171973</span>
<span class="t" style="left:439.75px;top:784.89px;font-size:14.3px;line-height:14.3px;letter-spacing:-0.048px;">NTI/PO/2024/0317</span>
<span class="t" style="left:607.60px;top:784.89px;font-size:14.3px;line-height:14.3px;letter-spacing:0.018px;">2024-03-17</span>
<span class="t" style="left:776.50px;top:784.89px;font-size:14.3px;line-height:14.3px;letter-spacing:0.284px;">2024-03-22</span>
<span class="t" style="left:945.50px;top:784.89px;font-size:14.3px;line-height:14.3px;letter-spacing:0.104px;">Street Merdeka Raya...</span>
<span class="t" style="left:1114.30px;top:784.89px;font-size:14.3px;line-height:14.3px;letter-spacing:0.086px;">SMK Nelson Street N...</span>
<span class="t" style="left:1283.30px;top:784.89px;font-size:14.3px;line-height:14.3px;letter-spacing:0.085px;">Merdeka Raya Street...</span>
<span class="t" style="left:1451.20px;top:784.89px;font-size:14.3px;line-height:14.3px;letter-spacing:-0.979px;">2171973</span>
<span class="t" style="left:1620.30px;top:784.89px;font-size:14.3px;line-height:14.3px;letter-spacing:-0.237px;">11-CARB-CL-500</span>
<span class="t" style="left:1789.20px;top:784.89px;font-size:14.3px;line-height:14.3px;letter-spacing:0.108px;">Carb.Cleaner SEM</span>
<span class="t" style="left:1912.00px;top:784.89px;font-size:14.3px;line-height:14.3px;">U</span>
<div class="cb" style="top:817.29px"></div>
<span class="t" style="left:40.90px;top:818.99px;font-size:14.3px;line-height:14.3px;color:#4a6a9c;letter-spacing:1.200px;">20</span>
<span class="t" style="left:102.00px;top:818.99px;font-size:14.3px;line-height:14.3px;letter-spacing:-0.653px;">PT.SPS</span>
<span class="t" style="left:270.10px;top:818.99px;font-size:14.3px;line-height:14.3px;letter-spacing:-0.979px;">2171973</span>
<span class="t" style="left:439.75px;top:818.99px;font-size:14.3px;line-height:14.3px;letter-spacing:-0.048px;">NTI/PO/2024/0317</span>
<span class="t" style="left:607.60px;top:818.99px;font-size:14.3px;line-height:14.3px;letter-spacing:0.018px;">2024-03-17</span>
<span class="t" style="left:776.50px;top:818.99px;font-size:14.3px;line-height:14.3px;letter-spacing:0.284px;">2024-03-22</span>
<span class="t" style="left:945.50px;top:818.99px;font-size:14.3px;line-height:14.3px;letter-spacing:0.104px;">Street Merdeka Raya...</span>
<span class="t" style="left:1114.30px;top:818.99px;font-size:14.3px;line-height:14.3px;letter-spacing:0.086px;">SMK Nelson Street N...</span>
<span class="t" style="left:1283.30px;top:818.99px;font-size:14.3px;line-height:14.3px;letter-spacing:0.085px;">Merdeka Raya Street...</span>
<span class="t" style="left:1451.20px;top:818.99px;font-size:14.3px;line-height:14.3px;letter-spacing:-0.979px;">2171973</span>
<span class="t" style="left:1620.30px;top:818.99px;font-size:14.3px;line-height:14.3px;letter-spacing:-0.393px;">12-U22FER9</span>
<span class="t" style="left:1789.20px;top:818.99px;font-size:14.3px;line-height:14.3px;letter-spacing:0.252px;">Busi Denso VARIO</span>
</div>
<div class="thead">
<div class="vl h" style="left:92px"></div>
<div class="vl h" style="left:261px"></div>
<div class="vl h" style="left:429px"></div>
<div class="vl h" style="left:598px"></div>
<div class="vl h" style="left:767px"></div>
<div class="vl h" style="left:936px"></div>
<div class="vl h" style="left:1104px"></div>
<div class="vl h" style="left:1273px"></div>
<div class="vl h" style="left:1442px"></div>
<div class="vl h" style="left:1611px"></div>
<div class="vl h" style="left:1779px"></div>
<div class="cb hc" style="top:10px"></div>
<div class="sq" style="left:45px;background:#94a3b8"></div>
<span class="t" style="left:56.30px;top:11.13px;font-size:15.5px;line-height:15.5px;color:#334155;-webkit-text-stroke:0.12px #334155;">#</span>
<div class="sq b" style="left:101.75px"></div>
<span class="t" style="left:112.60px;top:12.15px;font-size:14.3px;line-height:14.3px;color:#334155;letter-spacing:0.960px;-webkit-text-stroke:0.12px #334155;">Vendor Or Suppli...</span>
<div class="sq b" style="left:270.50px"></div>
<span class="t" style="left:281.50px;top:12.15px;font-size:14.3px;line-height:14.3px;color:#334155;letter-spacing:1.476px;-webkit-text-stroke:0.12px #334155;">Subtotal</span>
<div class="sq b" style="left:439.25px"></div>
<span class="t" style="left:450.75px;top:12.15px;font-size:14.3px;line-height:14.3px;color:#334155;letter-spacing:1.523px;-webkit-text-stroke:0.12px #334155;">Po Number</span>
<div class="sq b" style="left:608.00px"></div>
<span class="t" style="left:619.50px;top:12.15px;font-size:14.3px;line-height:14.3px;color:#334155;letter-spacing:1.238px;-webkit-text-stroke:0.12px #334155;">Po Date</span>
<div class="sq b" style="left:776.75px"></div>
<span class="t" style="left:788.10px;top:12.15px;font-size:14.3px;line-height:14.3px;color:#334155;letter-spacing:1.232px;-webkit-text-stroke:0.12px #334155;">Delivery Date</span>
<div class="sq b" style="left:945.50px"></div>
<span class="t" style="left:957.10px;top:12.15px;font-size:14.3px;line-height:14.3px;color:#334155;letter-spacing:1.135px;-webkit-text-stroke:0.12px #334155;">Bill To Address</span>
<div class="sq b" style="left:1114.25px"></div>
<span class="t" style="left:1125.20px;top:12.15px;font-size:14.3px;line-height:14.3px;color:#334155;letter-spacing:1.153px;-webkit-text-stroke:0.12px #334155;">Ship To Address</span>
<div class="sq b" style="left:1283.00px"></div>
<span class="t" style="left:1294.50px;top:12.15px;font-size:14.3px;line-height:14.3px;color:#334155;letter-spacing:1.288px;-webkit-text-stroke:0.12px #334155;">Vendor Address</span>
<div class="sq b" style="left:1451.75px"></div>
<span class="t" style="left:1463.40px;top:12.15px;font-size:14.3px;line-height:14.3px;color:#334155;letter-spacing:1.613px;-webkit-text-stroke:0.12px #334155;">Total Amount</span>
<div class="sq g" style="left:1620.50px"></div>
<span class="t" style="left:1631.90px;top:12.15px;font-size:14.3px;line-height:14.3px;color:#334155;letter-spacing:1.135px;-webkit-text-stroke:0.12px #334155;">Item Number or ...</span>
<div class="sq g" style="left:1789.25px"></div>
<span class="t" style="left:1800.60px;top:12.15px;font-size:14.3px;line-height:14.3px;color:#334155;letter-spacing:1.397px;-webkit-text-stroke:0.12px #334155;">Item Description</span>
</div>
</div>
<footer class="ftr">
<div class="box" style="left:18px;top:876px;width:199px;height:29px"></div>
<span class="t" style="left:30.00px;top:882.90px;font-size:14.3px;line-height:14.3px;color:#64748b;letter-spacing:0.818px;">Showing</span>
<span class="t" style="left:98.25px;top:882.90px;font-size:14.3px;line-height:14.3px;font-weight:700;color:#0f172a;letter-spacing:2.094px;">20</span>
<span class="t" style="left:124.50px;top:882.90px;font-size:14.3px;line-height:14.3px;color:#64748b;letter-spacing:2.062px;">of</span>
<span class="t" style="left:146.25px;top:882.90px;font-size:14.3px;line-height:14.3px;font-weight:700;color:#0f172a;letter-spacing:2.094px;">20</span>
<span class="t" style="left:172.75px;top:882.90px;font-size:14.3px;line-height:14.3px;color:#64748b;letter-spacing:0.688px;">rows</span>
<div class="chip"></div>
<svg class="abs" style="left:240.300px;top:884.300px" width="13.1" height="13.1" viewBox="0 0 24 24" fill="none" stroke="#7322e6" stroke-width="2.0" stroke-linecap="round" stroke-linejoin="round"><path d="M14.500 2H6a2 2 0 0 0-2 2v16a2 2 0 0 0 2 2h12a2 2 0 0 0 2-2V7.500L14.500 2z"/><path d="M16 13H8M16 17H8"/></svg>
<span class="t" style="left:260.75px;top:882.90px;font-size:14.3px;line-height:14.3px;color:#7322e6;letter-spacing:-0.366px;-webkit-text-stroke:0.300px #7322e6;">Page 1</span>
<div class="kbd" style="left:1565px;width:41.250px"></div>
<span class="t" style="left:1571.20px;top:884.62px;font-size:11.2px;line-height:11.2px;letter-spacing:0.888px;-webkit-text-stroke:0.250px #475569;">Click</span>
<span class="t" style="left:1614.80px;top:883.80px;font-size:13px;line-height:13px;color:#94a3b8;letter-spacing:1.380px;">to edit</span>
<div class="sep" style="left:1669px"></div>
<div class="kbd" style="left:1680.500px;width:47px"></div>
<svg class="abs" style="left:1686px;top:885px" width="36" height="12" viewBox="0 0 36 12" fill="none" stroke="#475569" stroke-width="1" stroke-linecap="round" stroke-linejoin="round"><path d="M4.200 8.300v-4.400M2.400 5.600l1.800-1.800 1.800 1.800"/><path d="M11.300 3.900v4M9.500 6.300l1.800 1.800 1.800-1.800"/><path d="M22.800 5.600h-6.800M17.800 3.800l-1.800 1.800 1.800 1.800"/><path d="M25.500 5.600h7.200M30.900 3.800l1.800 1.800-1.800 1.800"/></svg>
<span class="t" style="left:1736.25px;top:883.80px;font-size:13px;line-height:13px;color:#94a3b8;letter-spacing:1.371px;">navigate</span>
<div class="sep" style="left:1805.800px"></div>
<div class="kbd" style="left:1817.500px;width:45px;background:#f4f6fa"></div>
<span class="t" style="left:1823.25px;top:884.62px;font-size:11.2px;line-height:11.2px;letter-spacing:0.569px;-webkit-text-stroke:0.250px #475569;">Ctrl+S</span>
<span class="t" style="left:1872.75px;top:883.80px;font-size:13px;line-height:13px;color:#94a3b8;letter-spacing:0.927px;">save</span>
</footer>
</body></html>
